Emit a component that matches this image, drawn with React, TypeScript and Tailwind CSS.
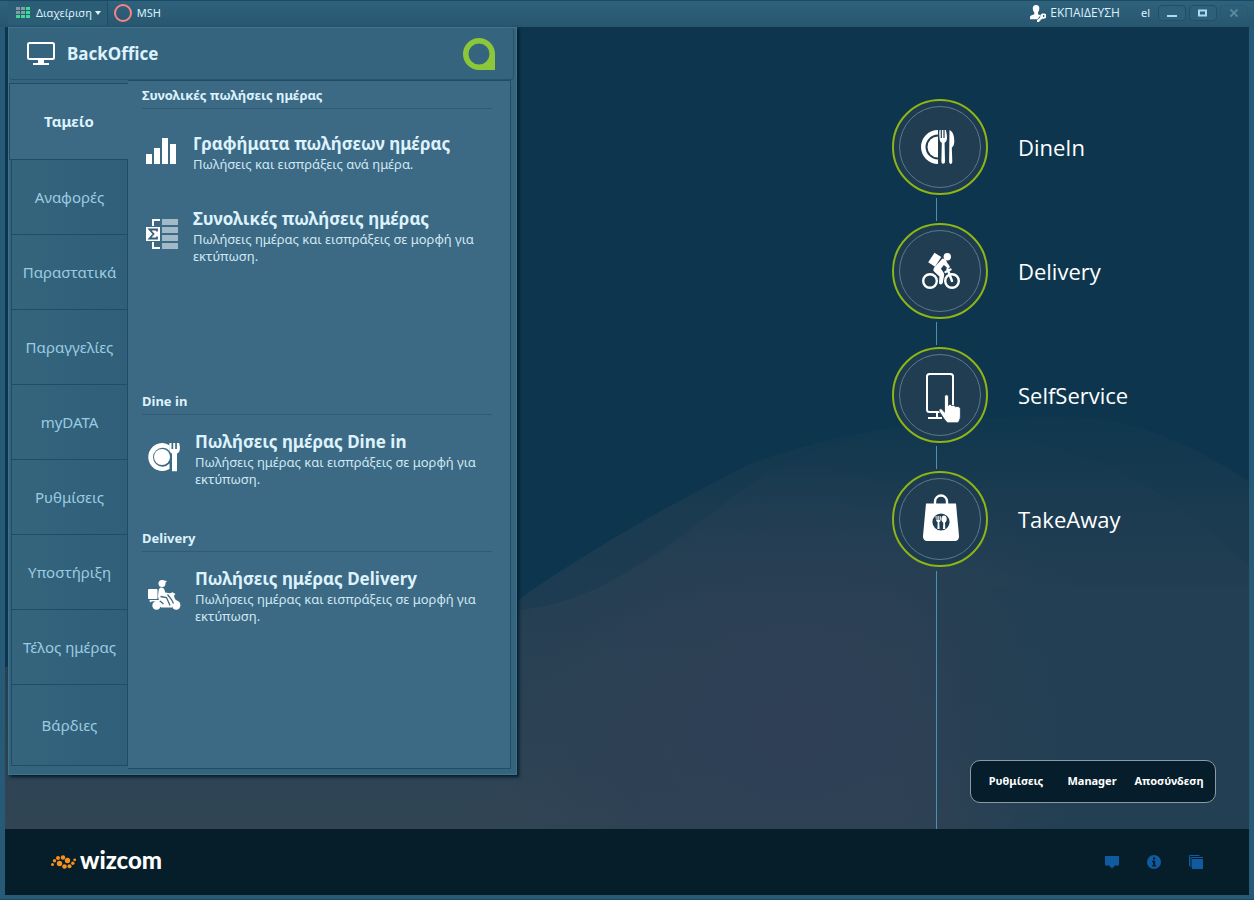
import type { ReactNode } from "react";

const tabs = ["Αναφορές", "Παραστατικά", "Παραγγελίες", "myDATA", "Ρυθμίσεις", "Υποστήριξη", "Τέλος ημέρας"];

function Backdrop() {
  return (
    <svg className="absolute inset-0 h-full w-full" viewBox="0 0 1244 802" preserveAspectRatio="none" aria-hidden="true">
      <defs>
        <linearGradient id="hillBack" x1="0" y1="0" x2="0" y2="1">
          <stop offset="0" stopColor="#0f374e" />
          <stop offset="0.25" stopColor="#1b3b50" />
          <stop offset="1" stopColor="#263f53" />
        </linearGradient>
        <linearGradient id="hillFront" x1="0" y1="0" x2="0" y2="1">
          <stop offset="0" stopColor="#1a3b51" stopOpacity="0" />
          <stop offset="0.45" stopColor="#243f52" />
          <stop offset="1" stopColor="#314554" />
        </linearGradient>
        <radialGradient id="dusk">
          <stop offset="0" stopColor="#2f4056" />
          <stop offset="0.5" stopColor="#2e4055" stopOpacity="0.7" />
          <stop offset="1" stopColor="#2e4055" stopOpacity="0" />
        </radialGradient>
        <linearGradient id="east" x1="0" y1="0" x2="1" y2="0">
          <stop offset="0" stopColor="#213e52" stopOpacity="0" />
          <stop offset="0.5" stopColor="#223f53" />
          <stop offset="1" stopColor="#233f54" />
        </linearGradient>
        <clipPath id="frontClip">
          <path d="M0 802V640C300 620 440 590 514 583C600 575 660 520 755 450C840 395 960 400 1050 420C1150 450 1200 500 1244 540V802Z" />
        </clipPath>
      </defs>
      <rect width="1244" height="802" fill="#0d364e" />
      <path d="M0 802V640C300 640 460 610 514 572C590 520 660 480 745 437C860 395 980 388 1072 390C1140 394 1200 425 1244 455V802Z" fill="url(#hillBack)" />
      <g clipPath="url(#frontClip)">
        <rect y="400" width="1244" height="402" fill="url(#hillFront)" />
        <ellipse cx="790" cy="700" rx="340" ry="260" fill="url(#dusk)" />
        <rect x="900" y="560" width="344" height="242" fill="url(#east)" />
      </g>
    </svg>
  );
}

function TitleBar() {
  const cells = [0, 1, 2, 3, 4, 5, 6, 7, 8];
  const winButton =
    "flex h-4 w-7 items-center justify-center rounded-sm border border-[#214f69] bg-[#2f607a] text-[#a9dbf1]";
  return (
    <header className="flex h-[27px] items-center border-t border-[#1c4a63] bg-gradient-to-b from-[#2f627c] to-[#28566f] pb-0.5 pl-2 pr-1.5 text-[11px] text-[#dcf1fa]">
      <button type="button" className="flex h-full items-center gap-[5px] border-r border-[#1f4d66] bg-[#2c5d77] pl-2 pr-1.5">
        <svg width="15" height="12" viewBox="0 0 15 12" aria-hidden="true">
          {cells.map((n) => (
            <rect
              key={n}
              x={(n % 3) * 5}
              y={Math.floor(n / 3) * 4}
              width="4"
              height="3"
              fill={n === 2 || n > 4 ? "#3ddb95" : n === 4 || n === 1 ? "#7ba39f" : "#8798a5"}
            />
          ))}
        </svg>
        <span className="flex items-center gap-[3px]">
          Διαχείριση
          <svg width="6" height="4" viewBox="0 0 6 4" aria-hidden="true">
            <path d="M0 0h6L3 4Z" fill="currentColor" />
          </svg>
        </span>
      </button>
      <span className="flex items-center gap-[5px] pl-1.5">
        <svg width="18" height="18" viewBox="0 0 18 18" aria-hidden="true">
          <circle cx="9" cy="9" r="8" fill="none" stroke="#f98484" strokeWidth="2" />
        </svg>
        MSH
      </span>
      <span className="ml-auto flex items-center gap-1 font-['Open_Sans','Noto_Sans',sans-serif] text-xs">
        <svg width="16" height="17" viewBox="0 0 16 17" fill="#fff" aria-hidden="true">
          <path d="M6 0c2.500 0 3.500 1.600 3.300 3.800C9.200 5.800 8 7.500 8 7.500v1.700l2.600 1.100-3.200 3.900H0v-2.200c0-1 .8-1.500 1.700-1.800L4.300 9.200V7.500S2.900 6 2.800 3.800C2.700 1.600 3.600 0 6 0Z" />
          <path d="M12.800 8.600a2.700 2.700 0 1 1 .6 5.200l-.9-.2-.9 1h-1.100v1.100H9.400V17H7v-1.900l3.200-2.700c-.2-2 1-3.700 2.600-3.800Zm.8 1.500a.9.900 0 1 0 .1 1.800.9.900 0 0 0-.1-1.800Z" />
        </svg>
        ΕΚΠΑΙΔΕΥΣΗ
      </span>
      <button type="button" className="ml-[21px]">el</button>
      <span className="ml-2 flex gap-[3px]">
        <button type="button" aria-label="Minimize" className={winButton}>
          <svg width="10" height="8" viewBox="0 0 10 8" aria-hidden="true"><path d="M0 6h10v2H0Z" fill="currentColor" /></svg>
        </button>
        <button type="button" aria-label="Maximize" className={winButton}>
          <svg width="10" height="8" viewBox="0 0 10 8" aria-hidden="true"><path d="M1 1.500h7v5H1Z" fill="none" stroke="currentColor" strokeWidth="2" /></svg>
        </button>
        <button type="button" aria-label="Close" className="flex h-4 w-7 items-center justify-center rounded-sm border border-[#275a74] text-[#5f8ba1]">
          <svg width="8" height="8" viewBox="0 0 8 8" aria-hidden="true"><path d="m.5.5 7 7m0-7-7 7" stroke="currentColor" strokeWidth="1.800" /></svg>
        </button>
      </span>
    </header>
  );
}

function ChartIcon() {
  return (
    <svg className="mt-[6px]" width="30" height="26" viewBox="0 0 30 26" fill="#fff" aria-hidden="true">
      <path d="M0 16h6v10H0ZM8 10h6v16H8ZM16 0h6v26h-6ZM24 6h6v20h-6Z" />
    </svg>
  );
}

function TotalsIcon() {
  return (
    <svg className="mt-[12px]" width="32" height="30" viewBox="0 0 32 30" aria-hidden="true">
      <path d="M16 0h16v6H16ZM16 8h16v6H16ZM16 16h16v6H16ZM16 24h16v6H16Z" fill="#a2b9c8" />
      <path d="M14 1H7v6M14 29H7v-6" fill="none" stroke="#fff" strokeWidth="2" />
      <path d="M0 8h14v14H0Z" fill="#fff" />
      <path d="M11 12.500V10.500H3.500L7.500 15l-4 4.500H11v-2" fill="none" stroke="#2f5f79" strokeWidth="1.800" />
    </svg>
  );
}

function PlateIcon() {
  return (
    <svg className="mt-[13px]" width="32" height="29" viewBox="0 0 32 29" fill="#fff" aria-hidden="true">
      <path fillRule="evenodd" d="M14 0c3 0 5.500 1 7.500 2.500V8a9.400 9.400 0 1 0 0 12.500v5.500A14 14 0 1 1 14 0Z" />
      <circle cx="14" cy="14" r="8" />
      <path d="M21.500 0h2v6h1.700V0h2v6h1.700V0H31c.8 2 1 4 .8 6.500-.2 2-1.300 3.500-2.800 4v17.800h-5V10.500c-1.600-.6-2.600-2-2.700-4-.2-2.500-.1-4.500.2-6.500Z" />
    </svg>
  );
}

function ScooterIcon() {
  return (
    <svg className="mt-[13px]" width="33" height="30" viewBox="0 0 33 30" fill="#fff" aria-hidden="true">
      <circle cx="14" cy="3.500" r="3.500" />
      <path d="M14 .3 19 1l-1.500 1.400H14Z" />
      <rect y="9" width="9.500" height="10" rx="1" />
      <circle cx="8.500" cy="25.500" r="4.200" />
      <circle cx="28.200" cy="25.500" r="4.200" />
      <path d="M1.500 20H11l2 7h-2a5.500 5.500 0 0 0-9-4.500Z" />
      <path d="M12 8c2-1 4 0 4.500 2l.7 2.600 4.800.6 2.500-.9 3 1.800-1.500 1.300c.3 2 .9 3.400 2 4.600 2.100.8 3.600 2 4.300 3.900l-3-.7c-3-.2-4.600 1.500-5.200 4.300H13l-2-7-1-4 .5-5.500c.2-1.300.6-2.300 1.500-3Z" />
      <path d="m12.500 16.500 6 1 3.500 8m-2.500-11 4 5 2 4M12 21l3.500 3" fill="none" stroke="#3c6983" strokeWidth="1.300" />
    </svg>
  );
}

function Section({ title, children, first = false }: { title: string; children: ReactNode; first?: boolean }) {
  return (
    <section className={first ? "min-h-[306px]" : "min-h-[137px]"}>
      <h2 className="ml-3.5 mr-[18px] border-b border-[#2f5b74] pt-0.5 text-[13px] font-bold leading-[25px]">{title}</h2>
      <div className={first ? "pt-[23px]" : "pl-0.5 pt-[15px]"}>{children}</div>
    </section>
  );
}

function ReportLink({ icon, title, text }: { icon: ReactNode; title: string; text: string }) {
  return (
    <a href="#report" className="flex min-h-[75px] pl-[18px] pr-8">
      <span className="w-[47px] shrink-0">{icon}</span>
      <span>
        <span className="block text-[17px] font-bold leading-6">{title}</span>
        <span className="block text-[13px] leading-[17px] text-[#cfe8f3]">{text}</span>
      </span>
    </a>
  );
}

function BackOfficePanel() {
  return (
    <aside className="z-10 ml-[3px] flex w-[509px] shrink-0 flex-col self-start border border-[#41738d] bg-[#35647f] text-[#dcf2fc] shadow-[2px_2px_3px_#041c2a]">
      <div className="mr-0.5 flex h-[52px] items-center rounded border-b border-r border-[#25546d] pl-[17px] pr-[18px]">
        <svg width="30" height="26" viewBox="0 0 30 26" aria-hidden="true">
          <rect x="2" y="2" width="26" height="16" rx="1.500" fill="none" stroke="#fff" strokeWidth="2" />
          <path d="M12 18h6v4h5v2H7v-2h5Z" fill="#fff" />
        </svg>
        <h1 className="ml-[11px] text-[17px] font-bold">BackOffice</h1>
        <svg className="ml-auto" width="32" height="32" viewBox="0 0 32 32" aria-hidden="true">
          <path fillRule="evenodd" d="M16 0a16 16 0 0 1 16 16v16H16a16 16 0 0 1 0-32Zm0 5.500a10.500 10.500 0 1 0 0 21 10.500 10.500 0 0 0 0-21Z" fill="#8cc739" />
        </svg>
      </div>
      <div className="flex">
        <nav className="flex w-[119px] flex-col pt-[3px] text-[15px] text-[#9ccbe0]">
          <button type="button" className="h-[77px] border-y border-l border-[#1f4d66] bg-[#3c6983] font-bold text-[#dcf2fc]">Ταμείο</button>
          {tabs.map((tab) => (
            <button key={tab} type="button" className="ml-0.5 h-[75px] border-x border-b border-[#1f4d66] bg-gradient-to-r from-[#34657d] to-[#2f5f79]">
              {tab}
            </button>
          ))}
          <button type="button" className="ml-0.5 h-[81px] border-x border-b border-[#1f4d66] bg-gradient-to-r from-[#34657d] to-[#2f5f79]">Βάρδιες</button>
        </nav>
        <div className="mb-[5px] mr-[5px] min-h-[689px] flex-1 border border-l-0 border-[#1f4d66] bg-[#3c6983]">
          <Section title="Συνολικές πωλήσεις ημέρας" first>
            <ReportLink icon={<ChartIcon />} title="Γραφήματα πωλήσεων ημέρας" text="Πωλήσεις και εισπράξεις ανά ημέρα." />
            <ReportLink icon={<TotalsIcon />} title="Συνολικές πωλήσεις ημέρας" text="Πωλήσεις ημέρας και εισπράξεις σε μορφή για εκτύπωση." />
          </Section>
          <Section title="Dine in">
            <ReportLink icon={<PlateIcon />} title="Πωλήσεις ημέρας Dine in" text="Πωλήσεις ημέρας και εισπράξεις σε μορφή για εκτύπωση." />
          </Section>
          <Section title="Delivery">
            <ReportLink icon={<ScooterIcon />} title="Πωλήσεις ημέρας Delivery" text="Πωλήσεις ημέρας και εισπράξεις σε μορφή για εκτύπωση." />
          </Section>
        </div>
      </div>
    </aside>
  );
}

function DineInGlyph() {
  return (
    <>
      <path d="M46 31a17 17 0 0 0 0 34v-4.500a12.500 12.500 0 0 1 0-25Z" fill="#fff" />
      <path d="M46 37.500a10.500 10.500 0 0 0 0 21Z" fill="#fff" />
      <path d="M47.500 31h1.200v8h1.200v-8h1.500v8h1.200v-8h1.300c.9 4 1.200 6.500 1 9-.2 2-1.200 3.200-2.300 3.800l.4 18.700c0 3-3.600 3-3.600 0l.4-18.700c-1.200-.6-2-1.800-2.200-3.800-.2-2.500-.6-5-.1-9Z" fill="#fff" />
      <path d="M57.500 31c3.500 1.500 4.800 6 4.800 11 0 3-.7 5.500-2.500 6.500l.5 14c0 3.200-3.200 3.200-3.200 0Z" fill="#fff" />
    </>
  );
}

function BikeGlyph() {
  return (
    <>
      <g fill="none" stroke="#fff" strokeWidth="2.400">
        <circle cx="38" cy="58" r="6.800" />
        <circle cx="60" cy="58" r="6.800" />
        <path d="m55.500 46 4.500 12M53.500 49l5-2.500" strokeLinecap="round" />
      </g>
      <circle cx="55.300" cy="33.800" r="3.700" fill="#fff" />
      <path d="m42.500 29.800 6.800 4.200-6.300 9.700-6.800-4.500Z" fill="#fff" />
      <path d="M50.500 35.500c2.500.5 4.300 1.500 4.500 4l2.600 3.500c1 1.500-1 3-2.300 1.900l-3.400-2.800-3 3.700 2.600 3.800c.8 1.300.8 2.500.4 4l-1.200 6.500c-.8 2.300-4 1.500-3.600-.9l.3-5.600-4.800-4.500c-1.800-1.700-1.400-3.400-.2-4.900Z" fill="#fff" />
    </>
  );
}

function KioskGlyph() {
  return (
    <>
      <rect x="35" y="27" width="26" height="38" rx="2.500" fill="none" stroke="#fff" strokeWidth="2" />
      <path d="M45 65v6M36 71h14" stroke="#fff" strokeWidth="2" />
      <path
        d="M52.500 50c0-3 4-3 4 0v8.500c1-1.600 3-1.200 3.400.4 1.200-1.200 3.200-.6 3.500.9 1.600-.9 5-.1 5 2v7.500c0 3.500-1.500 4.500-2.300 6.500H55.500c-2.500-2-5-6.500-8-11-1.500-2.700 1-4 3-2l2 2.500Z"
        fill="#fff"
        stroke="#213d52"
        strokeWidth="0.800"
      />
    </>
  );
}

function BagGlyph() {
  return (
    <>
      <path d="M43 34v-3.500a6 6 0 0 1 12 0V34" fill="none" stroke="#fff" strokeWidth="2.400" />
      <path d="M34 32.500h30l3 32.500c.2 3-1.500 5-4 5H35c-2.500 0-4.200-2-4-5Z" fill="#fff" />
      <circle cx="49" cy="51" r="8.600" fill="#213d52" />
      <path d="M43.500 45h1v4h1v-4h1.200v4h1v-4h1c.4 4 0 5.500-1.400 6.300l.3 6.700h-2.200l.3-6.700c-1.600-.8-1.800-2.500-2.200-6.300ZM52 44.500c3.500 0 3.600 6 1 7.200l.3 6.300H51l.3-6.300c-2.700-1.200-2.500-7.200.7-7.200Z" fill="#fff" />
    </>
  );
}

const modes = [
  { label: "DineIn", glyph: <DineInGlyph /> },
  { label: "Delivery", glyph: <BikeGlyph /> },
  { label: "SelfService", glyph: <KioskGlyph /> },
  { label: "TakeAway", glyph: <BagGlyph /> },
];

function Launcher() {
  return (
    <div className="relative ml-auto flex w-[357px] shrink-0 flex-col pt-[72px]">
      {modes.map((mode, index) => (
        <div key={mode.label}>
          <button type="button" className="flex items-center gap-[30px] font-['Open_Sans','Noto_Sans',sans-serif] text-[22px] text-white">
            <svg width="96" height="96" viewBox="0 0 96 96" aria-hidden="true">
              <circle cx="48" cy="48" r="47" fill="#1c3b51" stroke="#8fb514" strokeWidth="2" />
              <circle cx="48" cy="48" r="40.500" fill="#213d52" stroke="#60798a" strokeWidth="1" />
              {mode.glyph}
            </svg>
            {mode.label}
          </button>
          {index < modes.length - 1 && (
            <div className="h-7 pb-0.5 pt-[3px]">
              <div className="ml-11 h-full w-px bg-[#4b90b5]" />
            </div>
          )}
        </div>
      ))}
      <div className="flex flex-1 pt-1">
        <div className="ml-11 w-px bg-[#4b90b5]" />
        <div className="mx-[33px] mb-[26px] flex h-[43px] flex-1 items-stretch self-end rounded-[10px] border border-[#8c9aa3] bg-[#061e2b] px-0.5 text-[11px] font-bold text-white">
          <button type="button" className="w-[86px]">Ρυθμίσεις</button>
          <button type="button" className="flex-1">Manager</button>
          <button type="button" className="w-[88px]">Αποσύνδεση</button>
        </div>
      </div>
    </div>
  );
}

function Footer() {
  return (
    <footer className="flex h-[66px] items-center bg-[#061e2a] px-[46px]">
      <div className="flex items-center gap-1 text-white">
        <svg width="25" height="14" viewBox="0 0 25 14" fill="#f7901e" aria-hidden="true">
          <circle cx="1.500" cy="9.500" r="1.500" />
          <circle cx="3.500" cy="5.800" r="1.700" />
          <circle cx="7" cy="3" r="2" />
          <circle cx="12" cy="2.500" r="2.200" />
          <circle cx="16.500" cy="5.500" r="2.700" />
          <circle cx="8.500" cy="8.500" r="2.700" />
          <circle cx="13.500" cy="11.500" r="2.300" />
          <circle cx="18.500" cy="11.200" r="2" />
          <circle cx="21.800" cy="8.200" r="1.700" />
          <circle cx="23.700" cy="4.800" r="1.400" />
        </svg>
        <span className="pb-1 font-[Lato] text-2xl font-black leading-6">wizcom</span>
      </div>
      <div className="ml-auto flex items-center gap-7 text-[#105aa0]">
        <button type="button" aria-label="Messages">
          <svg width="14" height="14" viewBox="0 0 14 14" fill="currentColor" aria-hidden="true"><path d="M0 1h14v9.500H10L7 13.500 4 10.500H0Z" /></svg>
        </button>
        <button type="button" aria-label="Information">
          <svg width="14" height="14" viewBox="0 0 14 14" aria-hidden="true">
            <circle cx="7" cy="7" r="7" fill="currentColor" />
            <path d="M6 2.500h2.200v2H6ZM5 5.800h3.200v4.400h1v1.300H5v-1.300h1V7H5Z" fill="#061e2a" />
          </svg>
        </button>
        <button type="button" aria-label="Windows">
          <svg width="14" height="14" viewBox="0 0 14 14" aria-hidden="true">
            <path d="M3 4h11v10H3Z" fill="currentColor" />
            <path d="M2 12.500V2.500h12M.500 11V.500h10" fill="none" stroke="currentColor" />
          </svg>
        </button>
      </div>
    </footer>
  );
}

export default function App() {
  return (
    <div className="flex min-h-screen flex-col border-b border-[#1c4a63] bg-[#275a76] font-['Noto_Sans',sans-serif]">
      <TitleBar />
      <div className="mx-[5px] mb-1 flex flex-1 flex-col">
        <main className="relative flex flex-1 bg-[#0d364e]">
          <Backdrop />
          <BackOfficePanel />
          <Launcher />
        </main>
        <Footer />
      </div>
    </div>
  );
}
